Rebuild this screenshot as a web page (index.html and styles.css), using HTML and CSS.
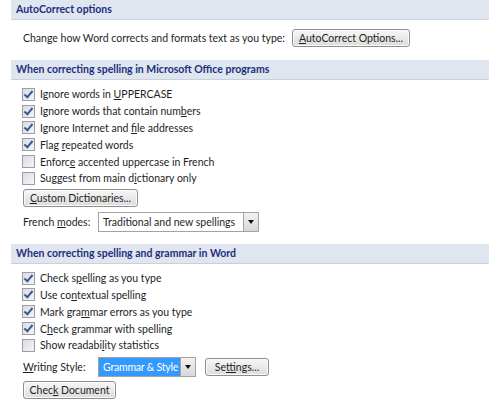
FILE: index.html
```html
<!DOCTYPE html>
<html lang="en">

<head>
    <meta charset="UTF-8">
    <title>Proofing</title>
    <link rel="stylesheet" href="styles.css">
</head>

<body>
    <div class="options">
        <div class="section-head">AutoCorrect options</div>
        <div class="section-body first-body">
            <div class="inline-row">
                <span class="row-text">Change how Word corrects and formats text as you type:</span>
                <button class="btn btn-autocorrect"><u>A</u>utoCorrect Options...</button>
            </div>
        </div>

        <div class="section-head">When correcting spelling in Microsoft Office programs</div>
        <div class="section-body">
            <label class="check-row"><span class="box checked"></span><span>Ignore words in <u>U</u>PPERCASE</span></label>
            <label class="check-row"><span class="box checked"></span><span>Ignore words that contain num<u>b</u>ers</span></label>
            <label class="check-row"><span class="box checked"></span><span>Ignore Internet and <u>f</u>ile addresses</span></label>
            <label class="check-row"><span class="box checked"></span><span>Flag <u>r</u>epeated words</span></label>
            <label class="check-row"><span class="box"></span><span>Enforc<u>e</u> accented uppercase in French</span></label>
            <label class="check-row"><span class="box"></span><span>Suggest from main d<u>i</u>ctionary only</span></label>
            <button class="btn btn-dict"><u>C</u>ustom Dictionaries...</button>
            <div class="inline-row select-row">
                <span class="row-label">French <u>m</u>odes:</span>
                <div class="select select-french">
                    <span class="select-value">Traditional and new spellings</span>
                    <span class="select-arrow"></span>
                </div>
            </div>
        </div>

        <div class="section-head">When correcting spelling and grammar in Word</div>
        <div class="section-body">
            <label class="check-row"><span class="box checked"></span><span>Check s<u>p</u>elling as you type</span></label>
            <label class="check-row"><span class="box checked"></span><span>Use co<u>n</u>textual spelling</span></label>
            <label class="check-row"><span class="box checked"></span><span>Mark gra<u>m</u>mar errors as you type</span></label>
            <label class="check-row"><span class="box checked"></span><span>C<u>h</u>eck grammar with spelling</span></label>
            <label class="check-row"><span class="box"></span><span>Show readabi<u>l</u>ity statistics</span></label>
            <div class="inline-row style-row">
                <span class="row-label"><u>W</u>riting Style:</span>
                <div class="select select-style">
                    <span class="select-value">Grammar &amp; Style</span>
                    <span class="select-arrow"></span>
                </div>
                <button class="btn btn-settings">Se<u>t</u>tings...</button>
            </div>
            <button class="btn btn-check">Chec<u>k</u> Document</button>
        </div>
    </div>
</body>

</html>
```

FILE: styles.css
```css
body {
    margin: 0;
    background-color: #fff;
    color: #1e1e1e;
    font-family: Lato, 'DejaVu Sans', sans-serif;
    font-size: 10.5px;
    width: 489px;
    height: 410px;
    overflow: hidden;
    white-space: nowrap;
}

.options {
    display: flex;
    flex-direction: column;
}

/* blue-grey band over each group */
.section-head {
    margin-left: 11px;
    height: 19px;
    line-height: 19px;
    padding-left: 5px;
    background-color: #dfe6ef;
    border-bottom: 1px solid #c9d0d9;
    font-weight: bold;
    color: #1d2f7c;
}

.section-body {
    display: flex;
    flex-direction: column;
    align-items: flex-start;
    padding: 6px 0 12px 22px;
}

.first-body {
    padding-top: 9px;
    padding-bottom: 13px;
}

.inline-row {
    display: flex;
    align-items: center;
}

.inline-row > * {
    flex-shrink: 0;
}

.row-text {
    padding-left: 1px;
    width: 269px;
}

.row-label {
    padding-left: 1px;
    width: 75px;
}

.check-row {
    display: flex;
    align-items: center;
    height: 16.8px;
}

/* checkbox */
.box {
    box-sizing: border-box;
    width: 13px;
    height: 13px;
    margin-right: 5px;
    border: 1px solid #9a9fa6;
    background: linear-gradient(135deg, #d9dde2, #f4f5f7);
    position: relative;
}

.box.checked::after {
    content: '';
    position: absolute;
    left: 3px;
    top: 0px;
    width: 3px;
    height: 7px;
    border-right: 2px solid #3e5896;
    border-bottom: 2px solid #3e5896;
    transform: rotate(40deg);
}

.btn {
    box-sizing: border-box;
    height: 18px;
    padding: 0;
    font-family: inherit;
    font-size: inherit;
    color: #1e1e1e;
    background: linear-gradient(#f7f7f7, #e9e9e9 50%, #dcdcdc);
    border: 1px solid #8e8e8e;
    border-radius: 3px;
    box-shadow: inset 0 0 0 1px #fbfbfb;
}

.btn-autocorrect {
    width: 118px;
}

.btn-dict {
    width: 115px;
    margin-top: 2px;
    margin-left: 1px;
}

.select-row {
    margin-top: 5px;
}

.select {
    box-sizing: border-box;
    display: flex;
    height: 20px;
    border: 1px solid #a3a3a3;
}

.select-value {
    flex: 1;
    min-width: 0;
    overflow: hidden;
    padding: 0 4px;
    line-height: 18px;
    border-right: 1px solid #a3a3a3;
}

.select-french {
    width: 161px;
}

.select-arrow {
    width: 14px;
    flex-shrink: 0;
    background: linear-gradient(#f2f2f2, #d8d8d8);
    position: relative;
}

/* small black triangle inside the drop button */
.select-arrow::after {
    content: '';
    position: absolute;
    left: 4px;
    top: 7px;
    border-left: 3px solid transparent;
    border-right: 3px solid transparent;
    border-top: 4px solid #111;
}

.style-row {
    margin-top: 3px;
}

.select-style {
    width: 98px;
}

.select-style .select-value {
    padding: 0 2px 0 4px;
    letter-spacing: -0.2px;
    background-color: #3399fe;
    color: #fff;
}

.btn-settings {
    width: 64px;
    margin-left: 9px;
}

.btn-check {
    width: 93px;
    margin-top: 4px;
    margin-left: 1px;
}
```
